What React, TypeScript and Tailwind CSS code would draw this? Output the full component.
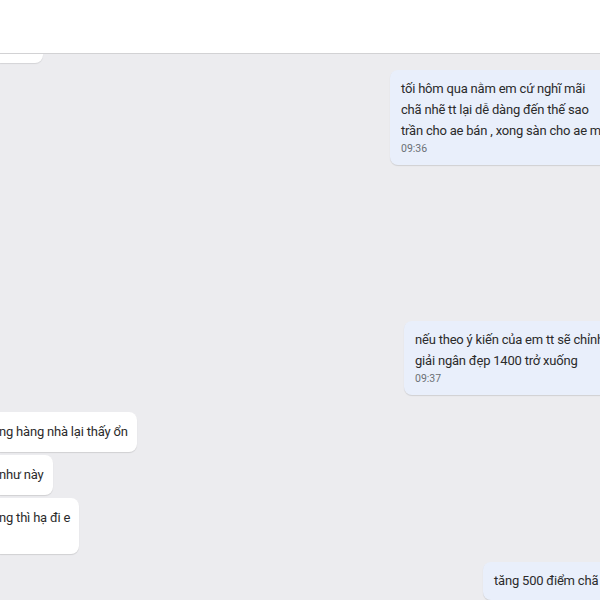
import React from 'react';

const font = { fontFamily: 'Roboto, "Noto Sans", sans-serif' };

const Sent = ({ lines, time, left, top }: { lines: string[]; time?: string; left: string; top: string }) => (
  <div className={`${left} ${top} w-[300px] shrink-0 rounded-lg bg-[#e9effb] px-[11px] pt-[8px] pb-[9px] shadow-[0_1px_1px_rgba(0,0,0,0.12)]`}>
    {lines.map((l, i) => (
      <div key={i} className="whitespace-nowrap text-[13px] leading-[21px] tracking-[-0.2px] text-[#2b2b2b]">{l}</div>
    ))}
    {time && <div className="mt-[1px] text-[10.5px] leading-[14px] text-[#6b6f76]">{time}</div>}
  </div>
);

const Received = ({ text, top, extra }: { text: string; top: string; extra?: boolean }) => (
  <div className={`${top} self-start rounded-r-lg bg-white pr-[9px] pt-[9px] ${extra ? 'pb-[26px]' : 'pb-[10px]'} shadow-[0_1px_1px_rgba(0,0,0,0.12)]`}>
    <div className="-ml-[1px] whitespace-nowrap text-[13px] leading-[21px] tracking-[-0.2px] text-[#2b2b2b]">{text}</div>
  </div>
);

export default function App() {
  return (
    <div className="flex h-[600px] w-[600px] flex-col overflow-hidden bg-[#ececef]" style={font}>
      <div className="h-[54px] shrink-0 border-b border-[#d2d2d4] bg-white" />
      <div className="flex flex-col">
        <div className="h-[9px] w-[43px] rounded-br-lg bg-white shadow-[0_1px_1px_rgba(0,0,0,0.1)]" />
        <Sent
          left="ml-[390px]"
          top="mt-[7px]"
          lines={['tối hôm qua nằm em cứ nghĩ mãi', 'chã nhẽ tt lại dễ dàng đến thế sao', 'trần cho ae bán , xong sàn cho ae mua']}
          time="09:36"
        />
        <Sent
          left="ml-[404px]"
          top="mt-[156px]"
          lines={['nếu theo ý kiến của em tt sẽ chỉnh', 'giải ngân đẹp 1400 trở xuống']}
          time="09:37"
        />
        <Received top="mt-[17px]" text="ng hàng nhà lại thấy ổn" />
        <Received top="mt-[3px]" text="như này" />
        <Received top="mt-[3px]" text="ng thì hạ đi e" extra />
        <Sent left="ml-[483px]" top="mt-[8px]" lines={['tăng 500 điểm chã nhẽ']} />
      </div>
    </div>
  );
}
